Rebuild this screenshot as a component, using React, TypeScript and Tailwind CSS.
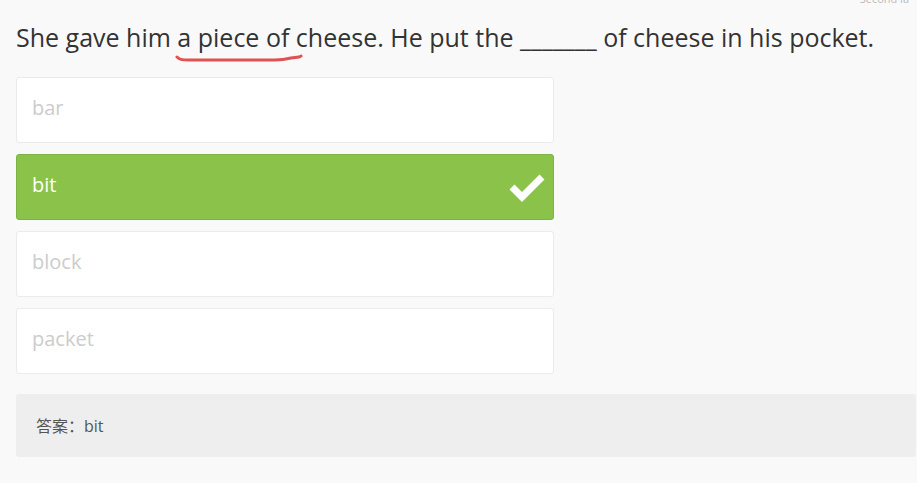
const options = [
  { label: "bar", correct: false },
  { label: "bit", correct: true },
  { label: "block", correct: false },
  { label: "packet", correct: false },
];

export default function App() {
  return (
    <div
      className="relative min-h-[483px] w-[917px] overflow-hidden bg-[#f9f9f9] px-4"
      style={{ fontFamily: '"Open Sans", "Noto Sans CJK SC", sans-serif' }}
    >
      {/* clipped caption at the very top */}
      <div className="absolute right-2 top-[-9px] text-[11px] text-[#bbb]">
        Second la
      </div>

      <p className="relative pt-[19px] text-[25px] leading-[36px] text-[#333]">
        She gave him{" "}
        <span className="relative">
          a piece of
          <svg
            className="absolute left-[-2px] top-[34px]"
            width="130"
            height="10"
            viewBox="0 0 130 10"
          >
            <path
              d="M2 3 C5 6 8 6 14 6 L100 6 C108 6 112 5 116 4 L124 3 L126 2"
              fill="none"
              stroke="#e05252"
              strokeWidth="3"
              strokeLinecap="round"
            />
          </svg>
        </span>{" "}
        cheese. He put the _______ of cheese in his pocket.
      </p>

      <div className="mt-[22px] flex w-[538px] flex-col gap-[11px]">
        {options.map((o) =>
          o.correct ? (
            <div
              key={o.label}
              className="flex h-[66px] items-center justify-between rounded-[3px] border border-[#7cb342] bg-[#8bc34a] pb-[4px] pl-[15px] pr-[8px] text-[20px] text-white"
            >
              <span>{o.label}</span>
              <svg width="36" height="30" viewBox="0 0 36 30" className="mt-[4px]">
                <path
                  d="M3 15 L13 25 L33 5"
                  fill="none"
                  stroke="#fff"
                  strokeWidth="7"
                  strokeLinejoin="miter"
                />
              </svg>
            </div>
          ) : (
            <div
              key={o.label}
              className="flex h-[66px] items-center rounded-[3px] border border-[#ebebeb] bg-white pb-[4px] pl-[15px] text-[20px] text-[#cccccc]"
            >
              {o.label}
            </div>
          )
        )}
      </div>

      <div className="mt-[20px] flex h-[63px] w-[900px] items-center rounded-[3px] bg-[#eeeeee] pl-[20px] text-[16px] text-[#555]">
        答案：bit
      </div>
    </div>
  );
}
